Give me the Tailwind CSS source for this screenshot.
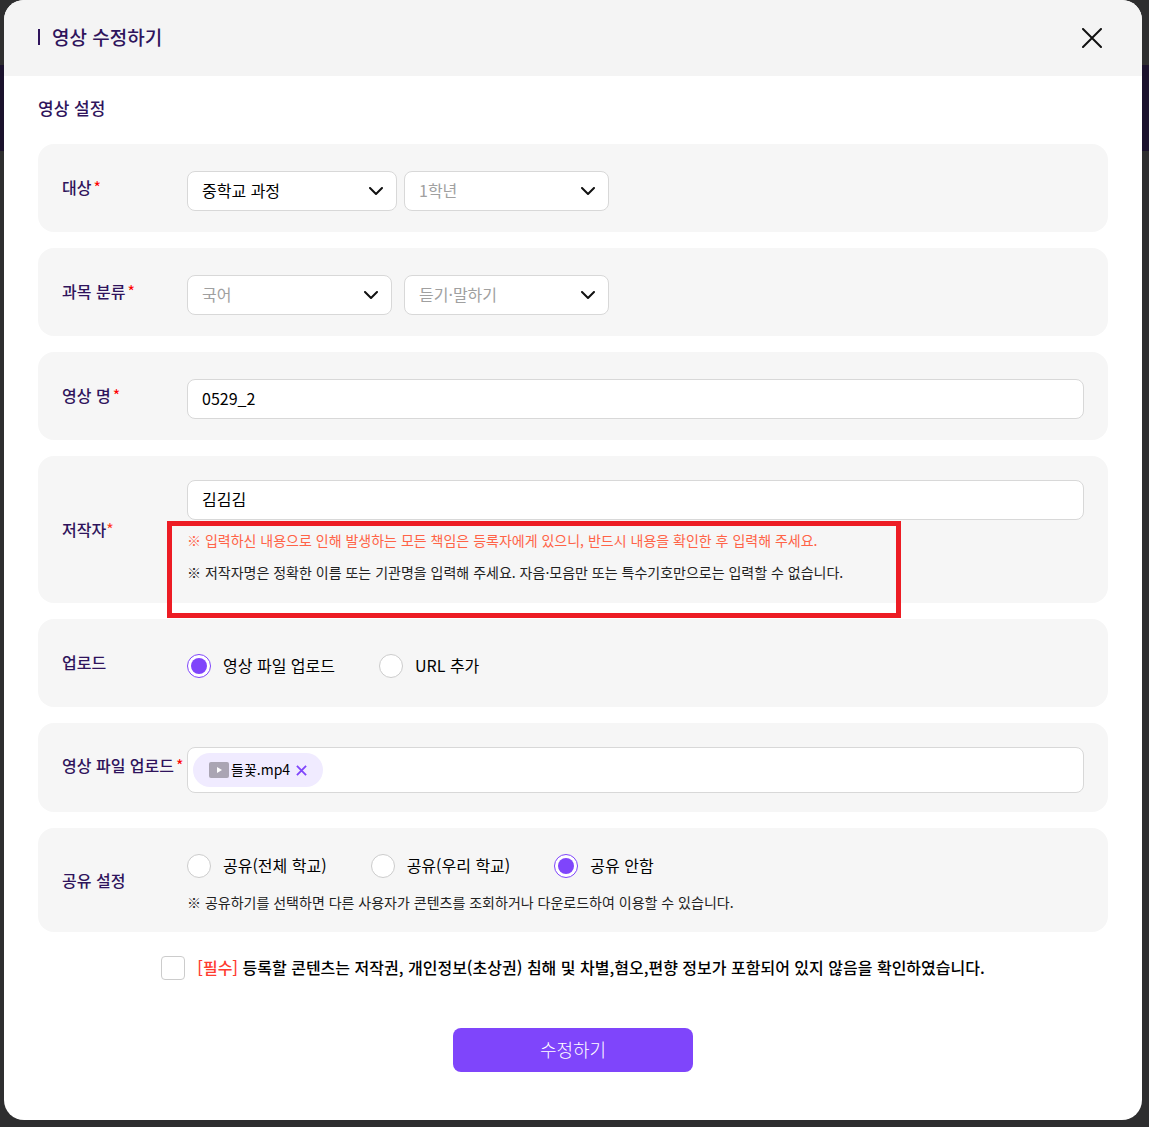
<!DOCTYPE html>
<html lang="ko">
<head>
    <meta charset="UTF-8">
    <meta name="viewport" content="width=device-width, initial-scale=1.0">
    <title>영상 수정하기</title>
    <script src="https://cdn.jsdelivr.net/npm/@tailwindcss/browser@4"></script>
</head>
<body class="relative min-h-screen bg-[#2e2e2f] font-['Noto_Sans_CJK_KR',sans-serif] text-base text-black">
    <!-- 배경 띠 -->
    <div class="absolute inset-x-0 top-[65px] h-[86px] bg-[#1b122d]"></div>

    <!-- 영상 수정 모달 -->
    <div class="relative pl-1 pr-[7px] pb-[7px]">
        <form class="overflow-hidden rounded-[20px] bg-white">
            <!-- 헤더 -->
            <div class="flex h-[76px] items-center justify-between bg-[#f4f4f4] pl-[34px] pr-9">
                <div class="flex items-center gap-3 pb-0.5">
                    <span class="h-4 w-0.5 bg-[#2f145c]"></span>
                    <h1 class="text-[19px] font-medium text-[#2f145c]">영상 수정하기</h1>
                </div>
                <button type="button" aria-label="닫기" class="p-1">
                    <svg width="20" height="20" viewBox="0 0 20 20" fill="none" stroke="#111" stroke-width="2" stroke-linecap="round">
                        <path d="M1 1l18 18M19 1L1 19"></path>
                    </svg>
                </button>
            </div>

            <div class="px-[34px] pb-12 pt-[18px]">
                <h2 class="text-[17px] leading-7 font-medium text-[#2f145c]">영상 설정</h2>

                <div class="mt-[22px] flex flex-col gap-4">
                    <!-- 대상 -->
                    <div class="flex min-h-[88px] items-center rounded-2xl bg-[#f6f6f6] px-6">
                        <label for="course" class="w-[125px] shrink-0 pb-0.5 font-medium whitespace-nowrap text-[#2f145c]">대상<span class="ml-0.5 font-normal text-[#f00]">*</span></label>
                        <div class="flex flex-1 pt-1.5">
                            <div class="w-[217px]">
                                <div class="relative w-[210px]">
                                    <select id="course" class="h-10 w-full appearance-none rounded-lg border border-[#d8d8d8] bg-white px-3.5 pb-0.5">
                                        <option>중학교 과정</option>
                                    </select>
                                    <svg class="pointer-events-none absolute top-4 right-3.5" width="14" height="9" viewBox="0 0 14 9" fill="none" stroke="#111" stroke-width="2" stroke-linecap="round" stroke-linejoin="round"><path d="M1 1l6 6 6-6"></path></svg>
                                </div>
                            </div>
                            <div class="relative w-[205px]">
                                <select aria-label="학년" class="h-10 w-full appearance-none rounded-lg border border-[#d8d8d8] bg-white px-3.5 pb-0.5 text-[#a0a0a0]">
                                    <option>1학년</option>
                                </select>
                                <svg class="pointer-events-none absolute top-4 right-3.5" width="14" height="9" viewBox="0 0 14 9" fill="none" stroke="#111" stroke-width="2" stroke-linecap="round" stroke-linejoin="round"><path d="M1 1l6 6 6-6"></path></svg>
                            </div>
                        </div>
                    </div>

                    <!-- 과목 분류 -->
                    <div class="flex min-h-[88px] items-center rounded-2xl bg-[#f6f6f6] px-6">
                        <label for="subject" class="w-[125px] shrink-0 pb-0.5 font-medium whitespace-nowrap text-[#2f145c]">과목 분류<span class="ml-0.5 font-normal text-[#f00]">*</span></label>
                        <div class="flex flex-1 pt-1.5">
                            <div class="w-[217px]">
                                <div class="relative w-[205px]">
                                    <select id="subject" class="h-10 w-full appearance-none rounded-lg border border-[#d8d8d8] bg-white px-3.5 pb-0.5 text-[#a0a0a0]">
                                        <option>국어</option>
                                    </select>
                                    <svg class="pointer-events-none absolute top-4 right-3.5" width="14" height="9" viewBox="0 0 14 9" fill="none" stroke="#111" stroke-width="2" stroke-linecap="round" stroke-linejoin="round"><path d="M1 1l6 6 6-6"></path></svg>
                                </div>
                            </div>
                            <div class="relative w-[205px]">
                                <select aria-label="영역" class="h-10 w-full appearance-none rounded-lg border border-[#d8d8d8] bg-white px-3.5 pb-0.5 text-[#a0a0a0]">
                                    <option>듣기·말하기</option>
                                </select>
                                <svg class="pointer-events-none absolute top-4 right-3.5" width="14" height="9" viewBox="0 0 14 9" fill="none" stroke="#111" stroke-width="2" stroke-linecap="round" stroke-linejoin="round"><path d="M1 1l6 6 6-6"></path></svg>
                            </div>
                        </div>
                    </div>

                    <!-- 영상 명 -->
                    <div class="flex min-h-[88px] items-center rounded-2xl bg-[#f6f6f6] px-6">
                        <label for="title" class="w-[125px] shrink-0 pb-0.5 font-medium whitespace-nowrap text-[#2f145c]">영상 명<span class="ml-0.5 font-normal text-[#f00]">*</span></label>
                        <div class="flex-1 pt-1.5">
                            <input id="title" type="text" value="0529_2" class="block h-10 w-full rounded-lg border border-[#d8d8d8] bg-white px-3.5 pb-0.5">
                        </div>
                    </div>

                    <!-- 저작자 -->
                    <div class="flex items-center rounded-2xl bg-[#f6f6f6] px-6">
                        <label for="author" class="w-[125px] shrink-0 pb-0.5 font-medium whitespace-nowrap text-[#2f145c]">저작자<span class="font-normal text-[#ff3b1f]">*</span></label>
                        <div class="flex-1 pt-6 pb-[15px]">
                            <input id="author" type="text" value="김김김" class="block h-10 w-full rounded-lg border border-[#d8d8d8] bg-white px-3.5 pb-0.5">
                            <div class="relative mt-1 text-sm leading-8">
                                <p class="text-[#ff6347]">※ 입력하신 내용으로 인해 발생하는 모든 책임은 등록자에게 있으니, 반드시 내용을 확인한 후 입력해 주세요.</p>
                                <p class="text-[#222]">※ 저작자명은 정확한 이름 또는 기관명을 입력해 주세요. 자음·모음만 또는 특수기호만으로는 입력할 수 없습니다.</p>
                                <!-- 안내 강조 박스 -->
                                <div class="pointer-events-none absolute -top-[3px] -bottom-[30px] -left-5 z-10 w-[734px] border-[5px] border-[#ed1c24]"></div>
                            </div>
                        </div>
                    </div>

                    <!-- 업로드 -->
                    <div role="radiogroup" aria-labelledby="upload-label" class="flex min-h-[88px] items-center rounded-2xl bg-[#f6f6f6] px-6">
                        <span id="upload-label" class="w-[125px] shrink-0 pb-0.5 font-medium text-[#2f145c]">업로드</span>
                        <div class="flex flex-1 gap-11 pt-1.5">
                            <label class="flex items-center gap-3">
                                <input type="radio" name="upload" checked class="grid size-6 appearance-none place-content-center rounded-full border border-[#ccc] bg-white before:size-4 before:rounded-full checked:border-[#7f45fb] checked:before:bg-[#7f45fb]">
                                <span class="pb-0.5">영상 파일 업로드</span>
                            </label>
                            <label class="flex items-center gap-3">
                                <input type="radio" name="upload" class="grid size-6 appearance-none place-content-center rounded-full border border-[#ccc] bg-white before:size-4 before:rounded-full checked:border-[#7f45fb] checked:before:bg-[#7f45fb]">
                                <span class="pb-0.5">URL 추가</span>
                            </label>
                        </div>
                    </div>

                    <!-- 영상 파일 업로드 -->
                    <div role="group" aria-labelledby="file-label" class="flex min-h-[89px] items-center rounded-2xl bg-[#f6f6f6] px-6">
                        <span id="file-label" class="w-[125px] shrink-0 pb-1.5 font-medium whitespace-nowrap text-[#2f145c]">영상 파일 업로드<span class="ml-0.5 font-normal text-[#f00]">*</span></span>
                        <div class="flex-1 pt-1.5 pb-px">
                            <div class="flex h-[46px] items-center rounded-lg border border-[#d8d8d8] bg-white px-[5px]">
                                <div class="flex h-[34px] items-center rounded-full bg-[#f0ebff] px-4 text-sm">
                                    <svg width="20" height="16" viewBox="0 0 20 16">
                                        <rect width="20" height="16" rx="2" fill="#aaa5b3"></rect>
                                        <path d="M8 5l5 3-5 3z" fill="#fff"></path>
                                    </svg>
                                    <span class="ml-0.5 pb-0.5">들꽃.mp4</span>
                                    <button type="button" aria-label="파일 삭제" class="ml-1.5">
                                        <svg width="11" height="11" viewBox="0 0 12 12" fill="none" stroke="#7f45fb" stroke-width="2"><path d="M1 1l10 10M11 1L1 11"></path></svg>
                                    </button>
                                </div>
                            </div>
                        </div>
                    </div>

                    <!-- 공유 설정 -->
                    <div role="radiogroup" aria-labelledby="share-label" class="flex items-center rounded-2xl bg-[#f6f6f6] px-6">
                        <span id="share-label" class="w-[125px] shrink-0 font-medium text-[#2f145c]">공유 설정</span>
                        <div class="flex-1 pt-[26px] pb-3.5">
                            <div class="flex h-6 items-center gap-11">
                                <label class="flex items-center gap-3">
                                    <input type="radio" name="share" class="grid size-6 appearance-none place-content-center rounded-full border border-[#ccc] bg-white before:size-4 before:rounded-full checked:border-[#7f45fb] checked:before:bg-[#7f45fb]">
                                    <span class="pb-0.5">공유(전체 학교)</span>
                                </label>
                                <label class="flex items-center gap-3">
                                    <input type="radio" name="share" class="grid size-6 appearance-none place-content-center rounded-full border border-[#ccc] bg-white before:size-4 before:rounded-full checked:border-[#7f45fb] checked:before:bg-[#7f45fb]">
                                    <span class="pb-0.5">공유(우리 학교)</span>
                                </label>
                                <label class="flex items-center gap-3">
                                    <input type="radio" name="share" checked class="grid size-6 appearance-none place-content-center rounded-full border border-[#ccc] bg-white before:size-4 before:rounded-full checked:border-[#7f45fb] checked:before:bg-[#7f45fb]">
                                    <span class="pb-0.5">공유 안함</span>
                                </label>
                            </div>
                            <p class="mt-2 text-sm leading-8 text-[#222]">※ 공유하기를 선택하면 다른 사용자가 콘텐츠를 조회하거나 다운로드하여 이용할 수 있습니다.</p>
                        </div>
                    </div>
                </div>

                <!-- 동의 -->
                <label class="mt-6 flex h-6 items-center justify-center gap-3 font-medium">
                    <input type="checkbox" class="size-6 appearance-none rounded border border-[#ccc] bg-white checked:bg-[#7f45fb]">
                    <span class="pb-0.5"><span class="text-[#ff3b30]">[필수]</span> 등록할 콘텐츠는 저작권, 개인정보(초상권) 침해 및 차별,혐오,편향 정보가 포함되어 있지 않음을 확인하였습니다.</span>
                </label>

                <button type="submit" class="mx-auto mt-12 block h-11 w-60 rounded-lg bg-[#7f45fb] pb-0.5 text-lg font-light text-white">수정하기</button>
            </div>
        </form>
    </div>
</body>
</html>
